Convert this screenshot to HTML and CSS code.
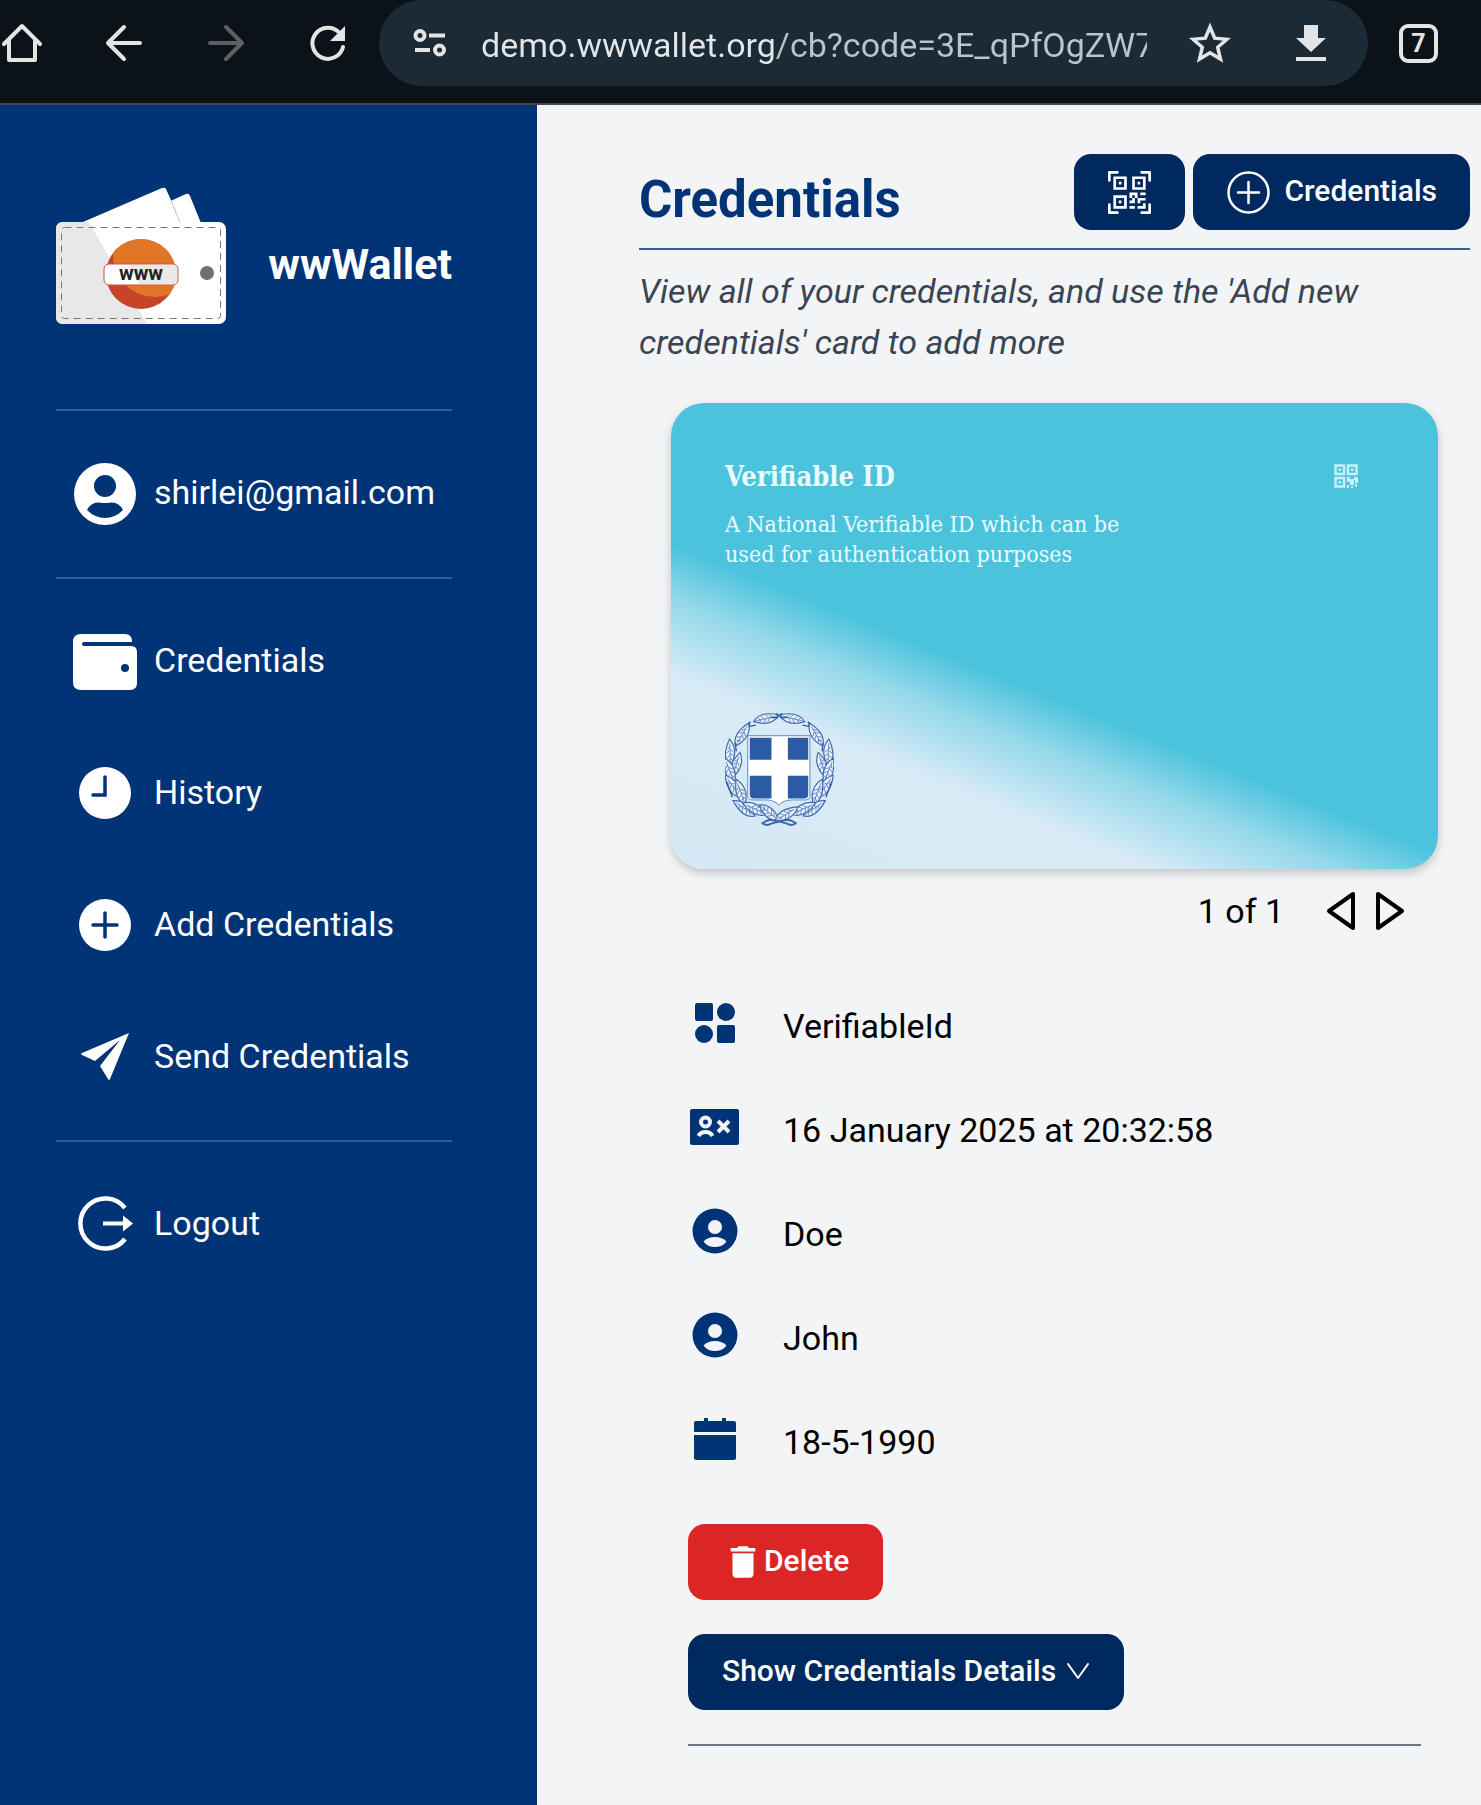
FILE: index.html
```html
<!DOCTYPE html>
<html lang="en">
<head>
<meta charset="utf-8">
<meta name="viewport" content="width=device-width, initial-scale=1">
<title>wwWallet - Credentials</title>
<link rel="stylesheet" href="styles.css">
</head>
<body>
<header class="browser">
  <div class="browser-nav">
    <button class="tool" aria-label="Home"><svg width="40" height="40" viewBox="0 0 40 40" fill="none" stroke="currentColor" stroke-width="4" stroke-linejoin="round" stroke-linecap="round"><path d="M2 21 20 3l18 18M7 18v19h26V18"/></svg></button>
    <button class="tool" aria-label="Back"><svg width="40" height="40" viewBox="0 0 40 40" fill="none" stroke="currentColor" stroke-width="4" stroke-linejoin="round" stroke-linecap="round"><path d="M36 20H5M20 4 4 20l16 16"/></svg></button>
    <button class="tool" aria-label="Forward" disabled><svg width="40" height="40" viewBox="0 0 40 40" fill="none" stroke="currentColor" stroke-width="4" stroke-linejoin="round" stroke-linecap="round"><path d="M4 20h31M20 4l16 16-16 16"/></svg></button>
    <button class="tool" aria-label="Reload"><svg width="40" height="40" viewBox="0 0 40 40"><path d="M35 24a15.500 15.500 0 1 1-3.500-14" fill="none" stroke="currentColor" stroke-width="4" stroke-linecap="round"/><path d="M37 3v15H22z" fill="currentColor"/></svg></button>
  </div>
  <div class="address">
    <button class="tool" aria-label="Site information"><svg width="34" height="28" viewBox="0 0 34 28" fill="none" stroke="currentColor" stroke-width="4"><circle cx="7" cy="6.500" r="4.500"/><path d="M16 6.500h16M2 21h15"/><circle cx="26.500" cy="21" r="4.500"/></svg></button>
    <input class="url" type="text" aria-label="Address" value="demo.wwwallet.org/cb?code=3E_qPfOgZW7">
    <button class="tool" aria-label="Bookmark"><svg width="42" height="42" viewBox="0 0 42 42" fill="none" stroke="currentColor" stroke-width="3.500"><path d="m21 5 4.700 11.200 12.200 1.100-9.200 8 2.800 11.800L21 30.800l-10.500 6.300 2.800-11.800-9.200-8 12.200-1.100z"/></svg></button>
    <button class="tool" aria-label="Downloads"><svg width="32" height="38" viewBox="0 0 32 38" fill="currentColor"><path d="M9 1h14v13h8L16 28 1 14h8zM1 33h30v4H1z"/></svg></button>
  </div>
  <button class="tabs" aria-label="Open tabs">7</button>
</header>

<div class="app">
  <aside class="sidebar">
    <div class="brand">
      <svg width="170" height="170" viewBox="0 0 170 170" aria-hidden="true">
        <defs><clipPath id="globe"><circle cx="85" cy="95" r="35"/></clipPath></defs>
        <path d="M110 24 130 15q3-1 4 2l13 32h-30z" fill="#fff"/>
        <path d="M20 46 106 9q3-1 4 1l17 38H20z" fill="#fff"/>
        <path d="m115 22 9 21" stroke="#9ccbe8" stroke-width="1"/>
        <rect y="43" width="170" height="102" rx="7" fill="#fff"/>
        <path d="M7 43h26l58 102H7q-7 0-7-7V50q0-7 7-7z" fill="#e8e8e8"/>
        <rect x="5.500" y="48.500" width="159" height="91" rx="3" fill="none" stroke="#777" stroke-dasharray="7 5"/>
        <g clip-path="url(#globe)"><path d="M50 60h70v70H50z" fill="#c9432a"/><circle cx="99" cy="76" r="42" fill="#e27627"/></g>
        <rect x="48" y="85" width="74" height="21" rx="5" fill="#fff" stroke="#c9543a"/>
        <path d="M72 86h45q4 0 4 4v11q0 4-4 4H83z" fill="#e9e9e9"/>
        <text class="logo-word" x="85" y="101" text-anchor="middle">www</text>
        <circle cx="151" cy="94" r="7" fill="#6f7071"/>
      </svg>
      <span>wwWallet</span>
    </div>
    <hr>
    <div class="nav-item">
      <svg width="66" height="66" viewBox="0 0 66 66"><circle cx="33" cy="33" r="31" fill="#fff"/><g fill="#003476"><circle cx="33" cy="25" r="11"/><path d="M15 49q4-8 12-7.500 6 1 12 0Q47 41 51 49q-8 8-18 8t-18-8z"/></g></svg>
      <span>shirlei@gmail.com</span>
    </div>
    <hr>
    <nav class="nav">
      <a class="nav-item" href="#credentials">
        <svg width="66" height="66" viewBox="0 0 66 66" fill="#fff"><path d="M9 5h44q7 0 7 8H12a2 2 0 0 0 0 4h47q6 0 6 6v31q0 7-7 7H9q-8 0-8-8V13q0-8 8-8z"/><circle cx="53" cy="39" r="4" fill="#003476"/></svg>
        <span>Credentials</span>
      </a>
      <a class="nav-item" href="#history">
        <svg width="66" height="66" viewBox="0 0 66 66"><circle cx="33" cy="32" r="26" fill="#fff"/><path d="M33 16v18H21" fill="none" stroke="#003476" stroke-width="3.500" stroke-linecap="round"/></svg>
        <span>History</span>
      </a>
      <a class="nav-item" href="#add">
        <svg width="66" height="66" viewBox="0 0 66 66"><circle cx="33" cy="32" r="26" fill="#fff"/><path d="M33 20v24M21 32h24" stroke="#003476" stroke-width="3.500" stroke-linecap="round"/></svg>
        <span>Add Credentials</span>
      </a>
      <a class="nav-item" href="#send">
        <svg width="66" height="66" viewBox="0 0 66 66" fill="#fff"><path d="m57 8-19 46q-1 2-2 0l-8-13 20-26-25 21-13-6q-2-1 0-2z"/></svg>
        <span>Send Credentials</span>
      </a>
    </nav>
    <hr>
    <a class="nav-item" href="#logout">
      <svg width="66" height="66" viewBox="0 0 66 66"><path d="M53 16a25 25 0 1 0 0 31" fill="none" stroke="#fff" stroke-width="4.500"/><path d="M31 29.500h20v-6l10 8-10 8v-6H31z" fill="#fff"/></svg>
      <span>Logout</span>
    </a>
  </aside>

  <main class="main">
    <div class="page-head">
      <h1>Credentials</h1>
      <div class="actions">
        <button class="btn" aria-label="Scan QR code"><svg width="43" height="43" viewBox="0 0 16 16" fill="currentColor"><path d="M0 .5A.5.5 0 0 1 .5 0h3a.5.5 0 0 1 0 1H1v2.500a.5.5 0 0 1-1 0zm12 0a.5.5 0 0 1 .5-.5h3a.5.5 0 0 1 .5.5v3a.5.5 0 0 1-1 0V1h-2.500a.5.5 0 0 1-.5-.5M.5 12a.5.5 0 0 1 .5.5V15h2.500a.5.5 0 0 1 0 1h-3a.5.5 0 0 1-.5-.5v-3a.5.5 0 0 1 .5-.5m15 0a.5.5 0 0 1 .5.5v3a.5.5 0 0 1-.5.5h-3a.5.5 0 0 1 0-1H15v-2.500a.5.5 0 0 1 .5-.5M4 4h1v1H4z"/><path d="M7 2H2v5h5zM3 3h3v3H3zm2 8H4v1h1z"/><path d="M7 9H2v5h5zm-4 1h3v3H3zm8-6h1v1h-1z"/><path d="M9 2h5v5H9zm1 1v3h3V3zM8 8v2h1v1H8v1h2v-2h1v2h1v-1h2v-1h-3V8zm2 2H9V9h1zm4 2h-1v1h-2v1h3zm-4 2v-1H8v1z"/><path d="M12 9h2V8h-2z"/></svg></button>
        <button class="btn btn-add"><svg width="43" height="43" viewBox="0 0 43 43" fill="none" stroke="currentColor" stroke-width="2.500"><circle cx="21.500" cy="21.500" r="20"/><path d="M21.500 11v21M11 21.500h21" stroke-linecap="round"/></svg><span>Credentials</span></button>
      </div>
    </div>
    <p class="intro">View all of your credentials, and use the 'Add new credentials' card to add more</p>

    <section class="viewer">
      <article class="card">
        <div class="card-top">
          <div>
            <h2>Verifiable ID</h2>
            <p>A National Verifiable ID which can be used for authentication purposes</p>
          </div>
          <svg width="24" height="24" viewBox="0 0 24 24" fill="none" stroke="#c9f0f8" stroke-width="2.500" aria-hidden="true"><path d="M1.500 1.500h8.500v8.500H1.500zM14 1.500h8.500v8.500H14zM1.500 14h8.500v8.500H1.500z"/><g fill="#c9f0f8" stroke="none"><path d="M4.500 4.500h2.500v2.500H4.500zM17 4.500h2.500v2.500H17zM4.500 17h2.500v2.500H4.500zM13 13h3v2h4v-2h4v6h-3v-3h-1v5h-4v-3h-3zM13 21h2v3h-2zM17 22h2v2h-2zM21 20h2v3h-2z"/></g></svg>
        </div>
        <svg width="109" height="117" viewBox="74 58 326 348" role="img" aria-label="Coat of arms of Greece">
          <defs>
            <g id="leaf" stroke="#3f69b0" stroke-width="3.500"><path d="M-40 0Q-14-28 40 0 4 28-40 0z" fill="#e9f2fb"/><path d="M-38 0h66M-20 0l-6-6M-8 0l-8-11M6 0l-8-12M18 0 9-8M-16 0l-8 6M-2 0l-10 11M10 0 0 11" fill="none" stroke-width="2"/></g>
            <g id="branch">
              <use href="#leaf" transform="translate(199 82) rotate(-14)"/>
              <use href="#leaf" transform="translate(126 130) rotate(-60)"/>
              <use href="#leaf" transform="translate(89 184) rotate(-92)"/>
              <use href="#leaf" transform="translate(107 222) rotate(-72)"/>
              <use href="#leaf" transform="translate(88 238) rotate(-112)"/>
              <use href="#leaf" transform="translate(97 285) rotate(-125)"/>
              <use href="#leaf" transform="translate(121 302) rotate(-110)"/>
              <use href="#leaf" transform="translate(131 351) rotate(-145)"/>
              <use href="#leaf" transform="translate(162 352) rotate(-155)"/>
              <path d="M230 66v14h-18M150 92q-8 12-2 14l18-4M104 155l4 26M78 270q8 20 18 48" fill="none" stroke="#2c5ba5" stroke-width="4"/>
            </g>
          </defs>
          <use href="#branch"/>
          <use href="#branch" transform="matrix(-1 0 0 1 472 0)"/>
          <use href="#leaf" transform="translate(208 366) rotate(38)"/>
          <use href="#leaf" transform="translate(258 368) rotate(-32)"/>
          <path d="M184 393q12 14 30 3l44-11q16 0 28 12M288 393q-12 14-30 3l-44-11q-16 0-28 12" fill="none" stroke="#3f69b0" stroke-width="6"/>
          <path d="M142 134h186v178q0 14-14 14h-38q-28 0-40 16-14-16-40-16h-40q-14 0-14-14z" fill="#fff" stroke="#4873b5" stroke-width="2.500"/>
          <path d="M148 140h65v66h-65zM262 140h61v66h-61zM148 254h65v68h-53q-12 0-12-12zM262 254h61v56q0 12-12 12h-49z" fill="#2b5ba5"/>
        </svg>
      </article>

      <div class="pager">
        <span>1 of 1</span>
        <div class="pager-buttons">
          <button aria-label="Previous"><svg width="30" height="40" viewBox="0 0 30 40" fill="none" stroke="#000" stroke-width="4" stroke-linejoin="round"><path d="M27 3v34L3 20z"/></svg></button>
          <button aria-label="Next"><svg width="30" height="40" viewBox="0 0 30 40" fill="none" stroke="#000" stroke-width="4" stroke-linejoin="round"><path d="M3 3v34l24-17z"/></svg></button>
        </div>
      </div>
    </section>

    <section class="details">
      <ul class="facts">
        <li><svg width="50" height="50" viewBox="0 0 50 50"><rect x="5" y="5" width="18" height="18" rx="2"/><circle cx="36" cy="14" r="9"/><circle cx="14" cy="36" r="9"/><rect x="27" y="27" width="18" height="18" rx="2"/></svg><span>VerifiableId</span></li>
        <li><svg width="50" height="50" viewBox="0 0 50 50"><rect x="0" y="7" width="49" height="36" rx="2"/><g fill="none" stroke="#f2f4f6" stroke-width="4"><circle cx="15.500" cy="20" r="4.500"/><path d="M8.500 34q2-4 7-4t7 4"/><path d="m28 19 11 11m0-11L28 30"/></g></svg><span>16 January 2025 at 20:32:58</span></li>
        <li><svg width="50" height="50" viewBox="0 0 50 50"><circle cx="25" cy="25" r="22.500"/><g fill="#f2f4f6"><circle cx="25" cy="21" r="7"/><path d="M13.500 35.500q4-4.500 11.500-4.500t11.500 4.500Q32.500 41 25 41t-11.500-5.500z"/></g></svg><span>Doe</span></li>
        <li><svg width="50" height="50" viewBox="0 0 50 50"><circle cx="25" cy="25" r="22.500"/><g fill="#f2f4f6"><circle cx="25" cy="21" r="7"/><path d="M13.500 35.500q4-4.500 11.500-4.500t11.500 4.500Q32.500 41 25 41t-11.500-5.500z"/></g></svg><span>John</span></li>
        <li><svg width="50" height="50" viewBox="0 0 50 50"><path d="M6 7h8V4h4v3h14V4h4v3h8q2 0 2 2v9H4V9q0-2 2-2zM4 21h42v23q0 2-2 2H6q-2 0-2-2z"/></svg><span>18-5-1990</span></li>
      </ul>
      <button class="btn btn-danger"><svg width="42" height="42" viewBox="0 0 24 24" fill="currentColor"><path d="M6 19c0 1.100.9 2 2 2h8c1.100 0 2-.9 2-2V7H6v12zM19 4h-3.500l-1-1h-5l-1 1H5v2h14V4z"/></svg><span>Delete</span></button>
      <button class="btn btn-details"><span>Show Credentials Details</span><svg width="24" height="24" viewBox="0 0 24 24" fill="none" stroke="currentColor" stroke-width="2" stroke-linecap="round" stroke-linejoin="round"><path d="m2 4 10 14L22 4"/></svg></button>
      <hr>
    </section>
  </main>
</div>
</body>
</html>
```
FILE: styles.css
```css
* {
  box-sizing: border-box;
}

body {
  margin: 0;
  min-height: 100vh;
  display: flex;
  flex-direction: column;
  background: #f2f4f6;
  color: #000;
  font-family: Roboto, "Liberation Sans", sans-serif;
  font-size: 34px;
  line-height: 50px;
}

button,
input {
  font: inherit;
  color: inherit;
  background: none;
  border: 0;
  padding: 0;
  margin: 0;
}

button {
  cursor: pointer;
}

svg {
  display: block;
  flex: none;
}

hr {
  margin: 0;
  border: 0;
  height: 2px;
}

/* Browser toolbar */
.browser {
  display: flex;
  align-items: flex-start;
  gap: 31px;
  height: 105px;
  padding-right: 43px;
  background: #0c1318;
  border-bottom: 2px solid #46484b;
  color: #e2e4e6;
}

.browser-nav {
  display: flex;
  align-items: center;
  gap: 62px;
  height: 86px;
  padding-left: 2px;
}

.tool {
  flex: none;
}

.tool:disabled {
  color: #5c6165;
}

.address {
  flex: 1;
  min-width: 0;
  display: flex;
  align-items: center;
  height: 86px;
  gap: 34px;
  padding: 0 41px 0 34px;
  border-radius: 43px;
  background: #1b2a34;
}

.url {
  flex: 1;
  min-width: 0;
  height: 54px;
  padding-top: 4px;
  margin-right: 8px;
  color: transparent;
  background: linear-gradient(90deg, #e2e6e9 295px, #b9c5cd 295px);
  -webkit-background-clip: text;
  background-clip: text;
}

.address .tool:last-child {
  margin-left: 30px;
}

.tabs {
  width: 39px;
  height: 39px;
  margin-top: 24px;
  border: 4px solid #e2e4e6;
  border-radius: 9px;
  font-size: 25px;
  line-height: 31px;
  font-weight: 700;
}

/* Layout */
.app {
  flex: 1;
  display: flex;
}

.sidebar {
  flex: 0 0 537px;
  padding: 74px 85px 40px 56px;
  background: #003476;
  color: #fff;
}

.main {
  flex: 1;
  min-width: 0;
  padding: 49px 11px 58px 102px;
}

/* Sidebar */
.brand {
  display: flex;
  align-items: center;
  justify-content: space-between;
  font-size: 43px;
  font-weight: 700;
  margin-bottom: 60px;
}

.logo-word {
  font-size: 20px;
  font-weight: 700;
  fill: #222;
}

.sidebar hr {
  background: #2f5d97;
}

.nav {
  display: flex;
  flex-direction: column;
  gap: 66px;
  margin: 50px 0 49px;
}

.nav-item {
  display: flex;
  align-items: center;
  gap: 16px;
  padding-left: 16px;
  color: inherit;
  text-decoration: none;
}

.nav-item span {
  padding-bottom: 4px;
}

.sidebar > .nav-item {
  margin: 50px 0;
}

/* Page heading */
.page-head {
  display: flex;
  justify-content: space-between;
  align-items: flex-start;
  padding-bottom: 2px;
  border-bottom: 2px solid #35608f;
}

h1 {
  margin: 0;
  color: #003476;
  font-size: 51px;
  line-height: 92px;
}

.actions {
  display: flex;
  gap: 8px;
}

.btn {
  display: flex;
  align-items: center;
  height: 76px;
  padding: 0 34px;
  border-radius: 17px;
  background: #002a5f;
  color: #fff;
  font-size: 30px;
  font-weight: 500;
  white-space: nowrap;
}

.btn span {
  padding-bottom: 3px;
}

.btn-add {
  gap: 14px;
  padding-right: 33px;
}

.intro {
  margin: 16px 0 35px;
  color: #3b4453;
  font-style: italic;
  line-height: 51px;
}

/* Credential card */
.viewer {
  padding: 0 32px;
}

.card {
  display: flex;
  flex-direction: column;
  justify-content: space-between;
  align-items: stretch;
  aspect-ratio: 767 / 466;
  padding: 54px 80px 42px 54px;
  border-radius: 33px;
  background: linear-gradient(202deg, #4bc3dd 58%, #93d8ea 65%, #d9ebf7 75%, #d4e9f5);
  box-shadow: 0 4px 10px rgba(0, 0, 0, 0.2);
  color: #e9fbff;
  font-family: "Roboto Slab", "DejaVu Serif Condensed", "DejaVu Serif", serif;
}

.card > svg {
  align-self: flex-start;
}

.card-top {
  display: flex;
  justify-content: space-between;
}

.card-top > svg {
  margin-top: 7px;
}

.card h2 {
  margin: 0 0 12px;
  font-size: 27px;
  line-height: 40px;
}

.card p {
  margin: 0;
  max-width: 420px;
  font-size: 23px;
  line-height: 30px;
}

.pager {
  display: flex;
  justify-content: flex-end;
  align-items: center;
  gap: 42px;
  margin-top: 17px;
  padding-right: 33px;
}

.pager-buttons {
  display: flex;
  gap: 19px;
}

/* Credential details */
.details {
  display: flex;
  flex-direction: column;
  align-items: flex-start;
  gap: 34px;
  padding: 0 49px;
}

.facts {
  list-style: none;
  margin: 38px 0 -4px;
  padding: 0;
}

.facts li {
  display: flex;
  align-items: center;
  gap: 43px;
  height: 104px;
}

.facts svg {
  margin: 0 0 7px 2px;
  fill: #003476;
}

.btn-danger {
  background: #dc2626;
}

.btn-details {
  gap: 10px;
}

.details hr {
  align-self: stretch;
  background: #6b7684;
}
```
